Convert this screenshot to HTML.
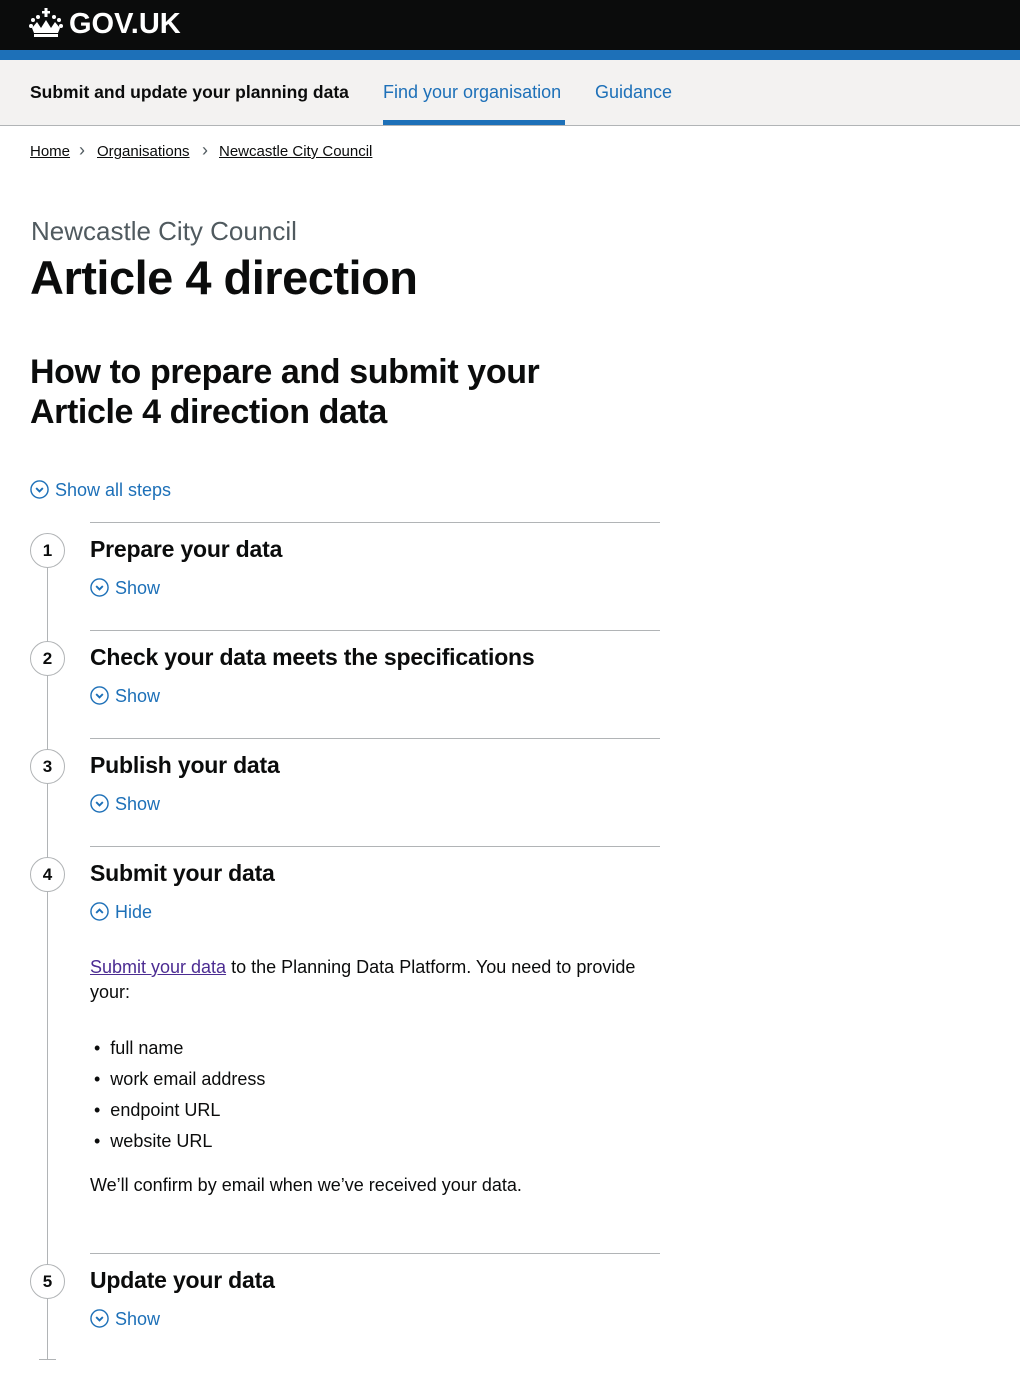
<!DOCTYPE html>
<html><head><meta charset="utf-8"><style>
*{margin:0;padding:0;box-sizing:border-box}
body{width:1020px;height:1400px;font-family:"Liberation Sans",sans-serif;color:#0b0c0c;background:#fff;position:relative;overflow:hidden}
.a{position:absolute;white-space:nowrap}
.hdr{position:absolute;left:0;top:0;width:1020px;height:50px;background:#0b0c0c}
.blue{position:absolute;left:0;top:50px;width:1020px;height:10px;background:#1d70b8}
.nav{position:absolute;left:0;top:60px;width:1020px;height:66px;background:#f3f2f1;border-bottom:1px solid #b1b4b6}
.link{color:#1d70b8}
.bc{font-size:15px;text-decoration:underline;color:#0b0c0c;top:143px}
.sep{position:absolute;left:90px;width:570px;height:1px;background:#b1b4b6}
.circ{position:absolute;left:30px;width:35px;height:35px;border:1px solid #b1b4b6;border-radius:50%;background:#fff;font-weight:bold;font-size:17px;text-align:center;line-height:33px}
.st{font-size:23px;font-weight:bold;left:90px;letter-spacing:-0.2px}
.sh{font-size:18px;color:#1d70b8;left:90px}
.ic{display:inline-block;width:19px;height:19px;vertical-align:-3px;margin-right:6px}
.body{font-size:18px;left:90px}
</style></head><body>
<div class="hdr"></div>
<svg class="a" style="left:29px;top:8px" width="34" height="30" viewBox="0 0 34 30"><g fill="#fff"><rect x="15.5" y="0" width="3" height="9"/><rect x="13" y="3" width="8" height="2.5"/><circle cx="4" cy="12" r="2"/><circle cx="30" cy="12" r="2"/><circle cx="9" cy="9" r="2"/><circle cx="25" cy="9" r="2"/><circle cx="2" cy="18" r="2"/><circle cx="32" cy="18" r="2"/><path d="M3 20 L8 14 L12 20 L17 12 L22 20 L26 14 L31 20 L29 25 L5 25Z"/><rect x="5" y="26" width="24" height="3"/></g></svg>
<div class="a" style="left:69px;top:8px;font-size:29px;font-weight:bold;color:#fff">GOV.UK</div>
<div class="blue"></div>
<div class="nav"></div>
<div class="a" style="left:30px;top:82px;font-size:17.5px;font-weight:bold">Submit and update your planning data</div>
<div class="a link" style="left:383px;top:82px;font-size:18px">Find your organisation</div>
<div class="a" style="left:383px;top:120px;width:182px;height:5px;background:#1d70b8"></div>
<div class="a link" style="left:595px;top:82px;font-size:18px">Guidance</div>
<div class="a bc" style="left:30px">Home</div>
<div class="a" style="left:79px;top:140px;font-size:18px;color:#505a5f">›</div>
<div class="a bc" style="left:97px">Organisations</div>
<div class="a" style="left:202px;top:140px;font-size:18px;color:#505a5f">›</div>
<div class="a bc" style="left:219px">Newcastle City Council</div>
<div class="a" style="left:31px;top:216px;font-size:26px;color:#505a5f">Newcastle City Council</div>
<div class="a" style="left:30px;top:250px;font-size:47px;font-weight:bold;letter-spacing:-0.5px">Article 4 direction</div>
<div class="a" style="left:30px;top:352px;font-size:34px;font-weight:bold;line-height:40px;letter-spacing:-0.4px">How to prepare and submit your<br>Article 4 direction data</div>
<div class="a sh" style="left:30px;top:480px"><svg class="ic" viewBox="0 0 20 20"><circle cx="10" cy="10" r="9" fill="none" stroke="#1d70b8" stroke-width="1.5"/><path d="M6.5 8.5 L10 12 L13.5 8.5" fill="none" stroke="#1d70b8" stroke-width="2"/></svg>Show all steps</div>
<div class="a" style="left:47px;top:550px;width:1px;height:810px;background:#b1b4b6"></div>
<div class="a" style="left:39px;top:1359px;width:17px;height:1px;background:#b1b4b6"></div>

<div class="sep" style="top:522px"></div>
<div class="circ" style="top:533px">1</div>
<div class="a st" style="top:536px">Prepare your data</div>
<div class="a sh" style="top:578px"><svg class="ic" viewBox="0 0 20 20"><circle cx="10" cy="10" r="9" fill="none" stroke="#1d70b8" stroke-width="1.5"/><path d="M6.5 8.5 L10 12 L13.5 8.5" fill="none" stroke="#1d70b8" stroke-width="2"/></svg>Show</div>

<div class="sep" style="top:630px"></div>
<div class="circ" style="top:641px">2</div>
<div class="a st" style="top:644px">Check your data meets the specifications</div>
<div class="a sh" style="top:686px"><svg class="ic" viewBox="0 0 20 20"><circle cx="10" cy="10" r="9" fill="none" stroke="#1d70b8" stroke-width="1.5"/><path d="M6.5 8.5 L10 12 L13.5 8.5" fill="none" stroke="#1d70b8" stroke-width="2"/></svg>Show</div>

<div class="sep" style="top:738px"></div>
<div class="circ" style="top:749px">3</div>
<div class="a st" style="top:752px">Publish your data</div>
<div class="a sh" style="top:794px"><svg class="ic" viewBox="0 0 20 20"><circle cx="10" cy="10" r="9" fill="none" stroke="#1d70b8" stroke-width="1.5"/><path d="M6.5 8.5 L10 12 L13.5 8.5" fill="none" stroke="#1d70b8" stroke-width="2"/></svg>Show</div>

<div class="sep" style="top:846px"></div>
<div class="circ" style="top:857px">4</div>
<div class="a st" style="top:860px">Submit your data</div>
<div class="a sh" style="top:902px"><svg class="ic" viewBox="0 0 20 20"><circle cx="10" cy="10" r="9" fill="none" stroke="#1d70b8" stroke-width="1.5"/><path d="M6.5 11.5 L10 8 L13.5 11.5" fill="none" stroke="#1d70b8" stroke-width="2"/></svg>Hide</div>
<div class="a body" style="top:955px;line-height:25px"><span style="color:#4c2c92;text-decoration:underline">Submit your data</span> to the Planning Data Platform. You need to provide<br>your:</div>
<div class="a body" style="top:1033px;line-height:31px;left:94px">•&nbsp;&nbsp;full name<br>•&nbsp;&nbsp;work email address<br>•&nbsp;&nbsp;endpoint URL<br>•&nbsp;&nbsp;website URL</div>
<div class="a body" style="top:1175px">We’ll confirm by email when we’ve received your data.</div>

<div class="sep" style="top:1253px"></div>
<div class="circ" style="top:1264px">5</div>
<div class="a st" style="top:1267px">Update your data</div>
<div class="a sh" style="top:1309px"><svg class="ic" viewBox="0 0 20 20"><circle cx="10" cy="10" r="9" fill="none" stroke="#1d70b8" stroke-width="1.5"/><path d="M6.5 8.5 L10 12 L13.5 8.5" fill="none" stroke="#1d70b8" stroke-width="2"/></svg>Show</div>
</body></html>
